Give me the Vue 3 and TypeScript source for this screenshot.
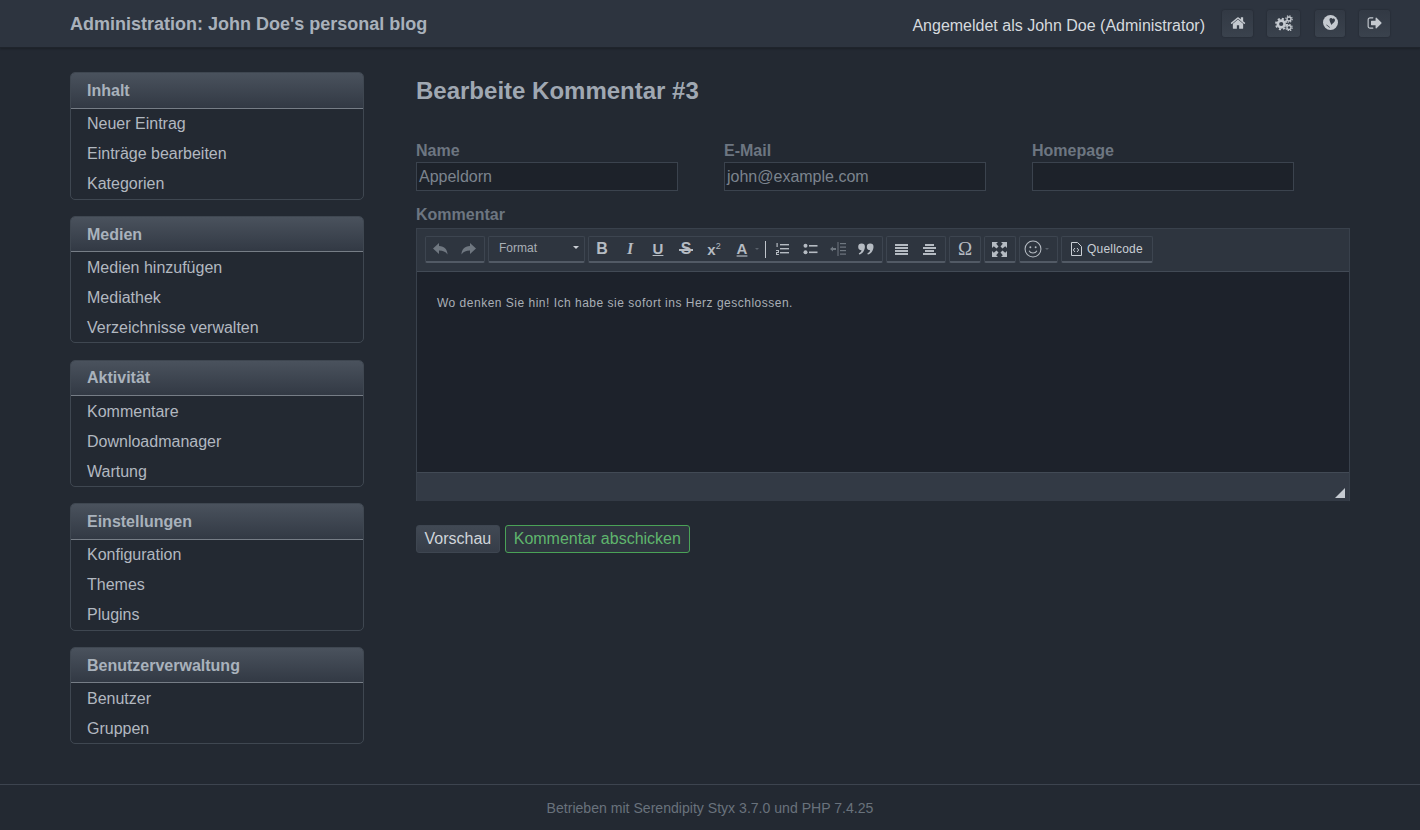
<script setup lang="ts">
interface Section { title: string; items: string[] }
const sections: Section[] = [
  { title: 'Inhalt', items: ['Neuer Eintrag', 'Einträge bearbeiten', 'Kategorien'] },
  { title: 'Medien', items: ['Medien hinzufügen', 'Mediathek', 'Verzeichnisse verwalten'] },
  { title: 'Aktivität', items: ['Kommentare', 'Downloadmanager', 'Wartung'] },
  { title: 'Einstellungen', items: ['Konfiguration', 'Themes', 'Plugins'] },
  { title: 'Benutzerverwaltung', items: ['Benutzer', 'Gruppen'] },
]
const fields = [
  { label: 'Name', value: 'Appeldorn' },
  { label: 'E-Mail', value: 'john@example.com' },
  { label: 'Homepage', value: '' },
]
</script>

<template>
  <div class="page">
    <header class="top">
      <h1 class="brand">Administration: John Doe's personal blog</h1>
      <div class="user">
        <span class="who">Angemeldet als John Doe (Administrator)</span>
        <a class="tbtn home">
          <svg width="16" height="16" viewBox="0 0 1792 1792"><path fill="currentColor" d="M1472 992v480q0 26-19 45t-45 19h-384v-384h-256v384h-384q-26 0-45-19t-19-45v-480q0-1 .5-3t.5-3l575-474 575 474q1 2 1 6zm223-69l-62 74q-8 9-21 11h-3q-13 0-21-7l-692-577-692 577q-12 8-24 7-13-2-21-11l-62-74q-8-10-7-23.500t11-21.500l719-599q32-26 76-26t76 26l244 204v-195q0-14 9-23t23-9h192q14 0 23 9t9 23v408l219 182q10 8 11 21.500t-7 23.500z"/></svg>
        </a>
        <a class="tbtn cogs">
          <svg width="18" height="16" viewBox="0 0 18 16">
            <circle cx="6.2" cy="9" r="3.4" fill="none" stroke="currentColor" stroke-width="2.6"/>
            <circle cx="6.200" cy="9" r="5.300" fill="none" stroke="currentColor" stroke-width="1.800" stroke-dasharray="2.100 2.060"/>
            <circle cx="14" cy="4" r="2" fill="none" stroke="currentColor" stroke-width="1.300"/>
            <circle cx="14" cy="4" r="3.200" fill="none" stroke="currentColor" stroke-width="1.200" stroke-dasharray="1.300 1.210"/>
            <circle cx="14" cy="12.500" r="2" fill="none" stroke="currentColor" stroke-width="1.300"/>
            <circle cx="14" cy="12.500" r="3.200" fill="none" stroke="currentColor" stroke-width="1.200" stroke-dasharray="1.300 1.210"/>
          </svg>
        </a>
        <a class="tbtn globe">
          <svg width="15" height="15" viewBox="0 0 15 15">
            <circle cx="7.500" cy="7.500" r="7.500" fill="currentColor"/>
            <path fill="#343b46" d="M6.500 4c.8-1.200 2.300-1.200 3 0 .8-.8 2.500-.4 2.500 1.200 0 1.600-2.500 3.200-3.700 4.800-.4-1.700-2.200-4.400-1.800-6zM3.500 9.500l3.500 2.700-.4.6L3.200 10z"/>
          </svg>
        </a>
        <a class="tbtn out">
          <svg width="16" height="16" viewBox="0 0 1792 1792"><path fill="currentColor" d="M704 1440q0 4 1 20t.5 26.500-3 23.500-10 19.500-20.500 6.500h-320q-119 0-203.500-84.500t-84.500-203.500v-704q0-119 84.500-203.500t203.500-84.500h320q13 0 22.500 9.500t9.500 22.500q0 4 1 20t.5 26.500-3 23.500-10 19.500-20.500 6.500h-320q-66 0-113 47t-47 113v704q0 66 47 113t113 47h312l11.500 1 11.500 3 8 5.500 7 9 2 13.500zm928-544q0 26-19 45l-544 544q-19 19-45 19t-45-19-19-45v-288h-448q-26 0-45-19t-19-45v-384q0-26 19-45t45-19h448v-288q0-26 19-45t45-19 45 19l544 544q19 19 19 45z"/></svg>
        </a>
      </div>
    </header>

    <div class="main">
      <nav class="side">
        <section v-for="s in sections" :key="s.title" class="box">
          <h3 class="box-h">{{ s.title }}</h3>
          <ul class="box-l">
            <li v-for="i in s.items" :key="i">{{ i }}</li>
          </ul>
        </section>
      </nav>

      <main class="content">
        <h2 class="title">Bearbeite Kommentar #3</h2>

        <div class="fields">
          <div v-for="f in fields" :key="f.label" class="field">
            <label class="lbl">{{ f.label }}</label>
            <div class="inp">{{ f.value }}</div>
          </div>
        </div>

        <label class="lbl kom">Kommentar</label>
        <div class="editor">
          <div class="bar">
            <div class="grp g1">
              <span class="ic dim">
                <svg width="17" height="14" viewBox="0 0 17 14"><path fill="currentColor" d="M7 1L1 6.500 7 12V8.500c4 0 6.500 1 8.500 4 0-5-3-8-8.500-8.500z"/></svg>
              </span>
              <span class="ic dim">
                <svg width="17" height="14" viewBox="0 0 17 14"><path fill="currentColor" d="M10 1l6 5.500-6 5.500V8.500c-4 0-6.500 1-8.500 4 0-5 3-8 8.500-8.500z"/></svg>
              </span>
            </div>
            <div class="grp fmt">
              <span class="fmt-t">Format</span>
              <span class="caret"></span>
            </div>
            <div class="grp g3">
              <span class="ic t b">B</span>
              <span class="ic t i">I</span>
              <span class="ic t u">U</span>
              <span class="ic t s">S</span>
              <span class="ic t x">x<sup>2</sup></span>
              <span class="ic t a">A</span>
              <span class="mini"></span>
              <span class="sep"></span>
              <span class="ic">
                <svg width="15" height="14" viewBox="0 0 15 14"><g fill="currentColor"><rect x="5" y="2" width="9" height="1.400"/><rect x="5" y="6" width="9" height="1.400"/><rect x="5" y="10" width="9" height="1.400"/><rect x="1.500" y="1" width="1.200" height="4"/><rect x="1" y="8" width="3" height="1"/><rect x="3" y="9" width="1" height="1"/><rect x="1" y="10" width="3" height="1"/><rect x="1" y="11" width="1" height="1"/><rect x="1" y="12" width="3" height="1"/></g></svg>
              </span>
              <span class="ic">
                <svg width="15" height="14" viewBox="0 0 15 14"><g fill="currentColor"><rect x="6" y="3" width="8.500" height="1.600"/><rect x="6" y="9.500" width="8.500" height="1.600"/><circle cx="2.500" cy="3.800" r="2"/><circle cx="2.500" cy="10.300" r="2"/></g></svg>
              </span>
              <span class="ic dim">
                <svg width="16" height="14" viewBox="0 0 16 14"><g fill="currentColor"><rect x="7.500" y="0" width="1" height="14"/><rect x="10" y="1" width="6" height="1.200"/><rect x="10" y="4.500" width="6" height="1.200"/><rect x="10" y="8" width="6" height="1.200"/><rect x="10" y="11.500" width="6" height="1.200"/><path d="M0 7l3-2.500V6h3v2H3v1.500z"/></g></svg>
              </span>
              <span class="ic">
                <svg width="16" height="12" viewBox="0 0 16 12"><path fill="currentColor" d="M3.700 .5a3.200 3.200 0 013.200 3.200c0 3.600-2.300 7-5.700 7.800l-.4-1.200c1.500-.7 2.500-1.800 2.700-3A3.200 3.200 0 013.700 .5zm8.600 0a3.200 3.200 0 013.200 3.200c0 3.600-2.300 7-5.700 7.800l-.4-1.200c1.500-.7 2.500-1.800 2.700-3a3.200 3.200 0 01.200-6.800z"/></svg>
              </span>
            </div>
            <div class="grp g4">
              <span class="ic">
                <svg width="13" height="11" viewBox="0 0 13 11"><g fill="currentColor"><rect width="13" height="2"/><rect y="3" width="13" height="2"/><rect y="6" width="13" height="2"/><rect y="9" width="13" height="2"/></g></svg>
              </span>
              <span class="ic">
                <svg width="13" height="11" viewBox="0 0 13 11"><g fill="currentColor"><rect x="2" width="9" height="2"/><rect y="3" width="13" height="2"/><rect x="2" y="6" width="9" height="2"/><rect y="9" width="13" height="2"/></g></svg>
              </span>
            </div>
            <div class="grp g5"><span class="ic t om">Ω</span></div>
            <div class="grp g5 fs">
              <span class="ic">
                <svg width="15" height="15" viewBox="0 0 15 15"><path fill="currentColor" d="M0 0h6L4.200 1.800 6.500 4.500 4.500 6.500 1.800 4.200 0 6zM15 0v6l-1.800-1.800-2.700 2.300-2-2 2.300-2.700L9 0zM0 15V9l1.800 1.800 2.700-2.300 2 2-2.300 2.700L6 15zM15 15H9l1.800-1.800-2.300-2.700 2-2 2.700 2.300L15 9z"/></svg>
              </span>
            </div>
            <div class="grp g6">
              <span class="ic">
                <svg width="18" height="18" viewBox="0 0 17 17" fill="none" stroke="currentColor"><circle cx="8.500" cy="8.500" r="7.500"/><circle cx="6" cy="6.800" r=".9" fill="currentColor" stroke="none"/><circle cx="11" cy="6.800" r=".9" fill="currentColor" stroke="none"/><path d="M4.800 10.200c1.500 2.800 5.900 2.800 7.400 0"/></svg>
              </span>
              <span class="mini"></span>
            </div>
            <div class="grp g7">
              <svg width="12" height="14" viewBox="0 0 12 14" fill="none" stroke="currentColor"><path d="M1.500 .5h6l4 4v9h-10z"/><path d="M5 6L3.300 8 5 10M7 6l1.700 2L7 10"/></svg>
              <span class="src">Quellcode</span>
            </div>
          </div>
          <div class="body">Wo denken Sie hin! Ich habe sie sofort ins Herz geschlossen.</div>
          <div class="status"><span class="grip"></span></div>
        </div>

        <div class="actions">
          <button class="btn">Vorschau</button>
          <button class="btn go">Kommentar abschicken</button>
        </div>
      </main>
    </div>

    <footer class="foot">Betrieben mit Serendipity Styx 3.7.0 und PHP 7.4.25</footer>
  </div>
</template>

<style>
html, body { margin: 0; background: #232932; }
</style>

<style scoped>
.page {
  height: 830px;
  display: flex;
  flex-direction: column;
  background: #232932;
  font-family: "Liberation Sans", Arial, sans-serif;
  font-size: 16px;
  overflow: hidden;
}
.top {
  height: 48px;
  box-sizing: border-box;
  display: flex;
  align-items: center;
  justify-content: space-between;
  padding: 0 30px 0 70px;
  background: #2d343f;
  border-bottom: 1px solid #1f242c;
  box-shadow: 0 1px 2px rgba(0, 0, 0, .25);
}
.brand {
  margin: 1px 0 0;
  font-size: 18px;
  font-weight: bold;
  color: #a9b1bb;
}
.user { display: flex; align-items: center; }
.who { color: #d6dade; margin-right: 17px; margin-top: 4px; }
.tbtn {
  height: 27px;
  box-sizing: border-box;
  display: flex;
  align-items: center;
  justify-content: center;
  border-radius: 3px;
  background: linear-gradient(#323944, #3a424d);
  box-shadow: 0 0 2px rgba(0, 0, 0, .35);
  color: #c4c9cf;
  padding-bottom: 2px;
}
.home { width: 31px; margin-right: 14px; }
.cogs { width: 33px; margin-right: 15px; }
.globe { width: 30px; margin-right: 14px; }
.out { width: 31px; }

.main { flex: 1; display: flex; padding: 24.150px 0 0 70px; }
.side { width: 294px; flex: none; }
.box {
  box-sizing: border-box;
  border: 1px solid #3f4751;
  border-radius: 5px;
  margin-bottom: 16.300px;
  overflow: hidden;
}
.box-h {
  margin: 0;
  height: 35.400px;
  box-sizing: border-box;
  padding: .8px 16px 0;
  line-height: 34px;
  font-size: 16px;
  font-weight: bold;
  color: #a9b2bc;
  background: linear-gradient(#4a525d, #323944);
  border-bottom: 1px solid #767d86;
}
.box-l { list-style: none; margin: 0; padding: 0; }
.box-l li {
  height: 30px;
  box-sizing: border-box;
  line-height: 29px;
  padding: .7px 16px 0;
  color: #b2b8c0;
}
.content { width: 934px; margin-left: 52px; padding-top: 1px; }
.title {
  margin: 0;
  height: 36px;
  line-height: 36px;
  font-size: 24px;
  font-weight: bold;
  color: #a0a8b2;
}
.fields {
  display: grid;
  grid-template-columns: repeat(3, 262px);
  column-gap: 46px;
  margin-top: 33px;
}
.lbl {
  display: block;
  font-weight: bold;
  line-height: 18px;
  color: #6d7681;
}
.inp {
  height: 29px;
  box-sizing: border-box;
  margin-top: 2px;
  border: 1px solid #3b434e;
  background: #1d222a;
  color: #7c848e;
  line-height: 27px;
  padding: 0 2px;
}
.kom { margin-top: 15px; }
.editor {
  margin-top: 4px;
  border: 1px solid #39414c;
  border-width: 1px 1px 0;
  background: #2e353f;
}
.bar {
  height: 43px;
  box-sizing: border-box;
  display: flex;
  align-items: flex-start;
  gap: 3px;
  padding: 7px 8px 0;
  background: #2e353f;
  border-bottom: 1px solid #424a55;
}
.grp {
  height: 27px;
  box-sizing: border-box;
  display: flex;
  align-items: center;
  border: 1px solid #3d4550;
  border-bottom: 2px solid #525a65;
  border-radius: 2px;
  color: #b5bbc2;
}
.g1 { width: 60px; padding: 0; }
.fmt { width: 97px; padding: 0 5px 3px 10px; justify-content: space-between; font-size: 12px; color: #a9afb6; }
.caret { border: 3.500px solid transparent; border-top-color: #c9ced4; border-bottom-width: 0; }
.g3 { width: 295px; padding: 0 3px 0 0; }
.g3 > .ic:first-child { margin-left: -1px; }
.g4 { width: 60px; padding: 0; }
.g5 { width: 32px; justify-content: center; }
.fs { padding-right: 2px; }
.g6 { width: 39px; padding-left: 0; }
.g6 .ic { width: 26px; }
.g7 { width: 92px; padding-left: 8px; gap: 5px; color: #c9ced4; }
.ic {
  width: 28px;
  height: 20px;
  flex: none;
  display: flex;
  align-items: center;
  justify-content: center;
}
.dim { color: #6f7780; }
.t { font-family: "Liberation Sans", Arial, sans-serif; font-size: 15px; font-weight: bold; }
.b { font-size: 16px; }
.i { font-style: italic; font-family: "Liberation Serif", serif; font-size: 16px; }
.u { text-decoration: underline; padding-bottom: 2px; box-sizing: border-box; }
.s { font-size: 16px; position: relative; }
.s::after {
  content: "";
  position: absolute;
  left: 7px;
  right: 7px;
  top: 10px;
  height: 1.500px;
  background: currentColor;
}
.x sup { font-size: 9px; line-height: 0; margin-top: -7px; font-weight: normal; }
.x { align-items: center; }
.a { text-decoration: underline; text-decoration-color: #7b838c; text-decoration-thickness: 2px; padding-bottom: 2px; box-sizing: border-box; }
.mini {
  flex: none;
  margin: 0 -4px 0 -1px;
  border: 2.500px solid transparent;
  border-top-color: #59616b;
  border-bottom-width: 0;
}
.om { font-family: "Liberation Serif", serif; font-size: 19px; font-weight: normal; }
.sep { width: 1px; height: 17px; background: #c0c5cb; margin: 0 2px 0 10px; flex: none; }
.src { font-size: 12px; letter-spacing: .2px; color: #c9ced4; }
.body {
  height: 200px;
  box-sizing: border-box;
  padding: 24px 20px 0;
  background: #1d222b;
  color: #a9afb6;
  font-size: 12px;
  letter-spacing: .5px;
  line-height: 15px;
}
.status {
  height: 29px;
  box-sizing: border-box;
  border-top: 1px solid #424a55;
  background: #333a45;
  position: relative;
}
.grip {
  position: absolute;
  right: 4px;
  bottom: 3px;
  width: 0;
  height: 0;
  border-left: 10px solid transparent;
  border-bottom: 10px solid #c6cbd2;
}
.actions { display: flex; gap: 5px; margin-top: 24px; }
.btn {
  height: 28px;
  padding: 0 7.500px;
  border: 1px solid #3e4651;
  border-radius: 3px;
  background: linear-gradient(#414954, #363d48);
  color: #d0d5da;
  font: 16px "Liberation Sans", Arial, sans-serif;
}
.go {
  padding: 0 8px;
  background: #2f3640;
  border-color: #4aa257;
  color: #5fb56d;
}
.foot {
  height: 46px;
  box-sizing: border-box;
  border-top: 1px solid #3d444f;
  text-align: center;
  font-size: 14.080px;
  line-height: 47px;
  color: #69727c;
}
</style>
